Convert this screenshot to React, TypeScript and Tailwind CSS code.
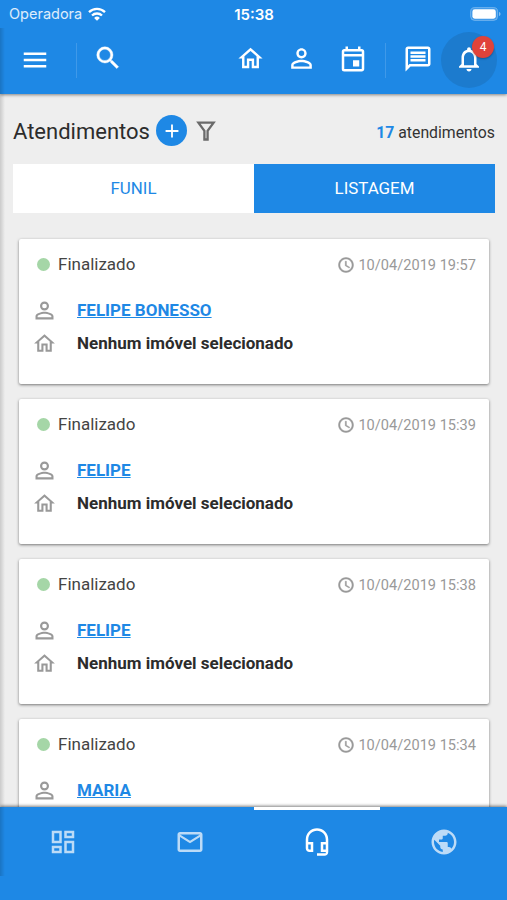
import type { ReactNode } from 'react'
import {
  MdAccessTime,
  MdAdd,
  MdMailOutline,
  MdMenu,
  MdNotificationsNone,
  MdOutlineDashboard,
  MdOutlineEvent,
  MdOutlineHeadsetMic,
  MdOutlineHome,
  MdOutlineMessage,
  MdPersonOutline,
  MdPublic,
  MdSearch,
} from 'react-icons/md'
import { clsx } from 'clsx'

interface Ticket {
  id: number
  client: string
  date: string
}

const tickets: Ticket[] = [
  { id: 1, client: 'FELIPE BONESSO', date: '10/04/2019 19:57' },
  { id: 2, client: 'FELIPE', date: '10/04/2019 15:39' },
  { id: 3, client: 'FELIPE', date: '10/04/2019 15:38' },
  { id: 4, client: 'MARIA', date: '10/04/2019 15:34' },
]

const navItems = [
  { id: 'dashboard', icon: MdOutlineDashboard },
  { id: 'mail', icon: MdMailOutline },
  { id: 'support', icon: MdOutlineHeadsetMic },
  { id: 'site', icon: MdPublic },
]

function StatusBar() {
  return (
    <div className="grid h-7 grid-cols-3 items-center pl-[9px] pr-[6px] font-['Inter',sans-serif] text-white">
      <div className="flex items-center gap-[6px]">
        <span className="text-[14.5px] leading-none text-white/85">Operadora</span>
        <svg viewBox="0 0 18 14" className="h-[14px] w-[18px]" fill="none" stroke="currentColor" strokeWidth="2.3">
          <path d="M1 5.2a11.5 11.5 0 0 1 16 0" />
          <path d="M4 8.5a7.2 7.2 0 0 1 10 0" />
          <path d="M9 13.8 6.1 10.9a4.1 4.1 0 0 1 5.8 0z" fill="currentColor" stroke="none" />
        </svg>
      </div>
      <span className="mr-[2px] text-center text-[15px] font-semibold leading-none">15:38</span>
      <div className="flex items-center justify-end">
        <svg viewBox="0 0 31 14" className="h-[14px] w-[31px]">
          <rect x="0.6" y="0.6" width="27" height="12.8" rx="4" fill="white" fillOpacity="0.15" stroke="white" strokeOpacity="0.3" />
          <rect x="2.4" y="2.3" width="23.4" height="9.4" rx="2.4" fill="white" />
          <path d="M29 5v4c1-.3 1.500-1.100 1.500-2S30 5.300 29 5z" fill="white" fillOpacity="0.45" />
        </svg>
      </div>
    </div>
  )
}

function Divider() {
  return <div className="h-[35px] w-px bg-white/15" />
}

function HeaderButton({ children, className }: { children: ReactNode; className?: string }) {
  return <button className={clsx('flex h-[56px] items-center justify-center', className)}>{children}</button>
}

function Header() {
  return (
    <header className="relative z-10 h-[94px] shrink-0 bg-[#1e88e5] text-white shadow-[0_1px_3px_rgba(0,0,0,0.45)]">
      <StatusBar />
      <div className="flex items-center pl-[20px] pr-[10px] pt-[4px]">
        <HeaderButton className="mr-[26px] w-[30px] pb-px">
          <MdMenu size={30} />
        </HeaderButton>
        <Divider />
        <HeaderButton className="ml-[16px] w-[30px] pb-[4px]">
          <MdSearch size={30} className="stroke-[0.3] [&>path:first-child]:stroke-0" />
        </HeaderButton>
        <div className="ml-auto flex items-center">
          <HeaderButton className="w-[51px] pb-[3px] pl-[2px]">
            <MdOutlineHome size={29} />
          </HeaderButton>
          <HeaderButton className="w-[52px] pb-[4px] pl-px">
            <MdPersonOutline size={31} />
          </HeaderButton>
          <HeaderButton className="w-[51px] pb-[2px]">
            <MdOutlineEvent size={30} />
          </HeaderButton>
          <div className="ml-[7px] mr-[6px]">
            <Divider />
          </div>
          <HeaderButton className="w-[50px] pb-[3px] pl-px">
            <MdOutlineMessage size={30} />
          </HeaderButton>
          <HeaderButton className="relative ml-[-1px] w-[56px] rounded-full bg-[#1c7bce] pb-[2px]">
            <MdNotificationsNone size={30} />
            <span className="absolute right-[3px] top-[4px] flex size-[22px] items-center justify-center rounded-full bg-[#e0433a] text-[12px] leading-none shadow-[0_1px_2px_rgba(0,0,0,0.3)]">
              4
            </span>
          </HeaderButton>
        </div>
      </div>
    </header>
  )
}

function TitleRow() {
  return (
    <div className="flex h-[32px] items-center">
      <h1 className="w-[136px] whitespace-nowrap pt-[2px] text-[22px] leading-none text-[#2c2c2c]">Atendimentos</h1>
      <button className="ml-[7px] flex size-[31px] items-center justify-center rounded-full bg-[#1e88e5] text-white">
        <MdAdd size={22} />
      </button>
      <svg viewBox="0 0 20 20" className="ml-[9px] size-[20px]" fill="none" stroke="#6a6a6a" strokeWidth="2.3">
        <path d="M2.400 1.600h15.200l-6 8.200v8.700H8.400V9.800z" />
      </svg>
      <p className="ml-auto pt-[4px] text-[15.8px] leading-none text-[#333]">
        <span className="font-bold text-[#1e88e5]">17</span> atendimentos
      </p>
    </div>
  )
}

function Tabs() {
  return (
    <div className="mt-[18px] grid h-[49px] shrink-0 grid-cols-2 text-[16.9px]">
      <button className="bg-white text-[#1e88e5]">FUNIL</button>
      <button className="bg-[#1e88e5] text-white">LISTAGEM</button>
    </div>
  )
}

function TicketCard({ ticket }: { ticket: Ticket }) {
  return (
    <article className="h-[145px] shrink-0 rounded-[2px] bg-white px-[13px] pt-[13px] shadow-[0_1px_3px_rgba(0,0,0,0.5)]">
      <div className="flex h-6 items-center">
        <span className="ml-[5px] size-[13px] rounded-full bg-[#a5d6a7]" />
        <span className="ml-[8px] pt-px text-[17px] text-[#444]">Finalizado</span>
        <div className="ml-auto flex items-center gap-[3px] pt-[4px] text-[#999]">
          <MdAccessTime size={18} className="mb-[2px] stroke-[0.6] [&>path:first-child]:stroke-0" />
          <span className="text-[14.6px]">{ticket.date}</span>
        </div>
      </div>
      <div className="mt-[18px] flex h-[33px] items-center">
        <MdPersonOutline size={27} className="mb-[1px] -ml-[1px] mr-[1px] text-[#999]" />
        <a className="ml-[18px] text-[17px] font-bold text-[#1e88e5] underline">{ticket.client}</a>
      </div>
      <div className="flex h-[33px] items-center">
        <MdOutlineHome size={25} className="text-[#999]" />
        <span className="ml-[20px] text-[17px] font-bold text-[#2c2c2c]">Nenhum imóvel selecionado</span>
      </div>
    </article>
  )
}

function BottomNav({ active }: { active: string }) {
  return (
    <nav className="relative z-10 grid h-[93px] shrink-0 grid-cols-4 bg-[#1e88e5] shadow-[0_-1px_3px_rgba(0,0,0,0.5)]">
      {navItems.map(({ id, icon: Icon }) => (
        <button
          key={id}
          className={clsx(
            'flex items-start justify-center border-t-[3px] pt-[17px] text-white',
            id === active ? 'border-white' : 'border-transparent'
          )}
        >
          <Icon size={30} className={id === active ? 'opacity-100' : 'opacity-70'} />
        </button>
      ))}
    </nav>
  )
}

export default function App() {
  return (
    <div className="relative flex h-[900px] w-[507px] flex-col overflow-hidden bg-[#eee] font-['Roboto',sans-serif]">
      <Header />
      <main className="flex min-h-0 flex-1 flex-col overflow-hidden pl-[13px] pr-[12px] pt-[21px]">
        <TitleRow />
        <Tabs />
        <section className="mt-[26px] flex flex-col gap-[15px] pl-[6px] pr-[6px]">
          {tickets.map((ticket) => (
            <TicketCard key={ticket.id} ticket={ticket} />
          ))}
        </section>
      </main>
      <BottomNav active="support" />
      {/* shadow of the closed side drawer */}
      <div className="pointer-events-none absolute left-0 top-[28px] z-20 h-[848px] w-[5px] bg-linear-to-r from-black/15 to-transparent" />
    </div>
  )
}
